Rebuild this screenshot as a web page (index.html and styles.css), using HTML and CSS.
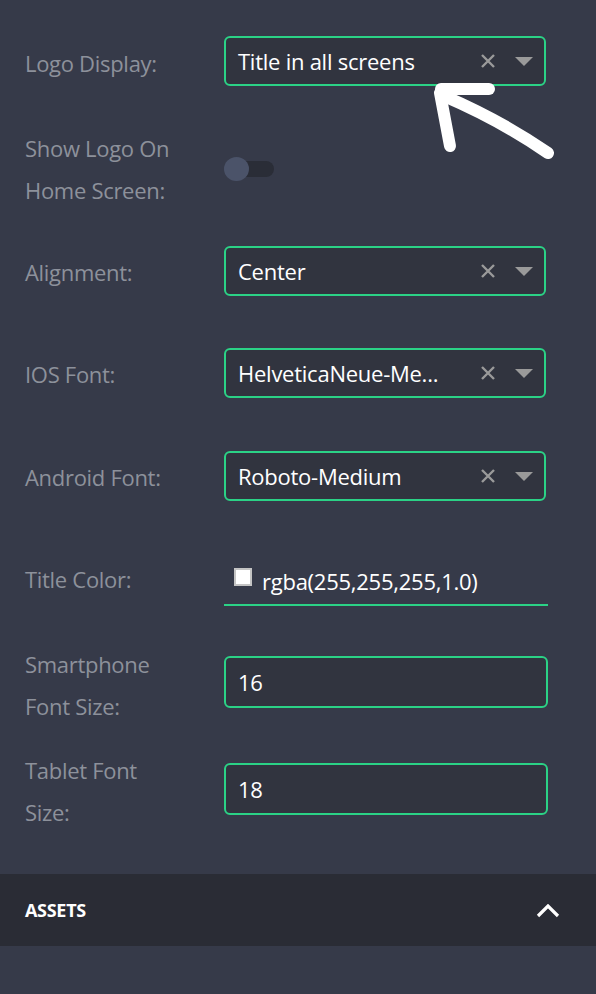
FILE: index.html
```html
<!DOCTYPE html>
<html>
<head>
<meta charset="utf-8">
<link rel="stylesheet" href="styles.css">
</head>
<body>
<div class="panel">
  <div class="row r1">
    <div class="label">Logo Display:</div>
    <div class="select">
      <span class="value">Title in all screens</span>
      <svg class="clear" width="14" height="14" viewBox="0 0 14 14"><path d="M1 1L13 13M13 1L1 13" stroke="#9a9a9a" stroke-width="2.4"/></svg>
      <svg class="caret" width="18" height="9" viewBox="0 0 18 9"><path d="M0 0H18L9 9Z" fill="#9a9a9a"/></svg>
    </div>
  </div>
  <div class="row r2">
    <div class="label">Show Logo On<br>Home Screen:</div>
    <div class="toggle"><span class="track"></span><span class="knob"></span></div>
  </div>
  <div class="row r3">
    <div class="label">Alignment:</div>
    <div class="select">
      <span class="value">Center</span>
      <svg class="clear" width="14" height="14" viewBox="0 0 14 14"><path d="M1 1L13 13M13 1L1 13" stroke="#9a9a9a" stroke-width="2.4"/></svg>
      <svg class="caret" width="18" height="9" viewBox="0 0 18 9"><path d="M0 0H18L9 9Z" fill="#9a9a9a"/></svg>
    </div>
  </div>
  <div class="row r4">
    <div class="label">IOS Font:</div>
    <div class="select">
      <span class="value">HelveticaNeue-Me...</span>
      <svg class="clear" width="14" height="14" viewBox="0 0 14 14"><path d="M1 1L13 13M13 1L1 13" stroke="#9a9a9a" stroke-width="2.4"/></svg>
      <svg class="caret" width="18" height="9" viewBox="0 0 18 9"><path d="M0 0H18L9 9Z" fill="#9a9a9a"/></svg>
    </div>
  </div>
  <div class="row r5">
    <div class="label">Android Font:</div>
    <div class="select">
      <span class="value">Roboto-Medium</span>
      <svg class="clear" width="14" height="14" viewBox="0 0 14 14"><path d="M1 1L13 13M13 1L1 13" stroke="#9a9a9a" stroke-width="2.4"/></svg>
      <svg class="caret" width="18" height="9" viewBox="0 0 18 9"><path d="M0 0H18L9 9Z" fill="#9a9a9a"/></svg>
    </div>
  </div>
  <div class="row r6">
    <div class="label">Title Color:</div>
    <div class="color-field">
      <span class="swatch"></span>
      <span class="value">rgba(255,255,255,1.0)</span>
    </div>
  </div>
  <div class="row r7">
    <div class="label">Smartphone<br>Font Size:</div>
    <div class="input"><span class="value">16</span></div>
  </div>
  <div class="row r8">
    <div class="label">Tablet Font<br>Size:</div>
    <div class="input"><span class="value">18</span></div>
  </div>
  <div class="section">
    <span class="section-title">ASSETS</span>
    <svg class="chev" width="24" height="14" viewBox="0 0 24 14"><path d="M2 12L12 2L22 12" fill="none" stroke="#fff" stroke-width="3.2"/></svg>
  </div>
  <svg class="annot" width="596" height="994" viewBox="0 0 596 994">
    <g fill="none" stroke="#fff" stroke-width="12" stroke-linecap="round" stroke-linejoin="round">
      <path d="M441 89H489"/>
      <path d="M440 93L450 146"/>
      <path d="M444 96Q500 120 548 153"/>
    </g>
  </svg>
</div>
</body>
</html>
```
FILE: styles.css
```css
html, body {
  margin: 0;
  padding: 0;
  background: #363a49;
}
body {
  font-family: "Open Sans", "Noto Sans", sans-serif;
  width: 596px;
  height: 994px;
  overflow: hidden;
}
.panel {
  position: relative;
  padding-top: 36px;
  height: 958px;
}
.row {
  display: flex;
  align-items: center;
  padding-left: 25px;
}
.label {
  width: 199px;
  flex: none;
  color: #8d919b;
  font-size: 22px;
  line-height: 42px;
  letter-spacing: -0.3px;
}
.r1 .label { padding-top: 4px; }
.r2 { margin-top: 41px; }
.r3 { margin-top: 35px; }
.r3 .label, .r4 .label, .r5 .label { padding-top: 2px; }
.r4 { margin-top: 52px; }
.r5 { margin-top: 53px; }
.r6 { margin-top: 57px; align-items: flex-start; }
.r7 { margin-top: 37px; align-items: flex-start; }
.r8 { margin-top: 22px; align-items: flex-start; }
.r7 .input { margin-top: 13px; }
.r8 .input { margin-top: 14px; }

.select, .input {
  box-sizing: border-box;
  height: 50px;
  border: 2px solid #2bd286;
  border-radius: 6px;
  background: #31343f;
  display: flex;
  align-items: center;
  padding: 0 11px 0 12px;
}
.select { width: 322px; }
.input { width: 324px; height: 52px; }
.value {
  color: #fff;
  font-size: 22px;
  font-weight: 500;
  letter-spacing: -0.25px;
}
.select .value { flex: 1; white-space: nowrap; }
.clear { margin-right: 20px; flex: none; }
.caret { flex: none; margin-top: 1px; }

.toggle {
  position: relative;
  width: 50px;
  height: 24px;
}
.track {
  position: absolute;
  left: 6px;
  top: 4px;
  width: 44px;
  height: 16px;
  border-radius: 8px;
  background: #2a2d37;
}
.knob {
  position: absolute;
  left: 0;
  top: 0;
  width: 25px;
  height: 24px;
  border-radius: 50%;
  background: #4b5369;
}

.color-field {
  box-sizing: border-box;
  width: 324px;
  height: 48px;
  border-bottom: 2px solid #2bd286;
  display: flex;
  align-items: center;
  padding-left: 10px;
}
.swatch {
  box-sizing: border-box;
  width: 18px;
  height: 18px;
  background: #fff;
  border: 2px solid #c4c4c4;
  margin-right: 10px;
  margin-top: -8px;
}
.color-field .value { margin-top: -1px; }

.section {
  margin-top: 41px;
  height: 72px;
  background: #2a2c35;
  display: flex;
  align-items: center;
  justify-content: space-between;
  padding: 0 36px 0 25px;
}
.section-title {
  color: #fff;
  font-weight: 700;
  font-size: 18px;
  letter-spacing: -0.3px;
}
.chev { margin-top: 2px; }

.annot {
  position: absolute;
  left: 0;
  top: 0;
  pointer-events: none;
}
```
